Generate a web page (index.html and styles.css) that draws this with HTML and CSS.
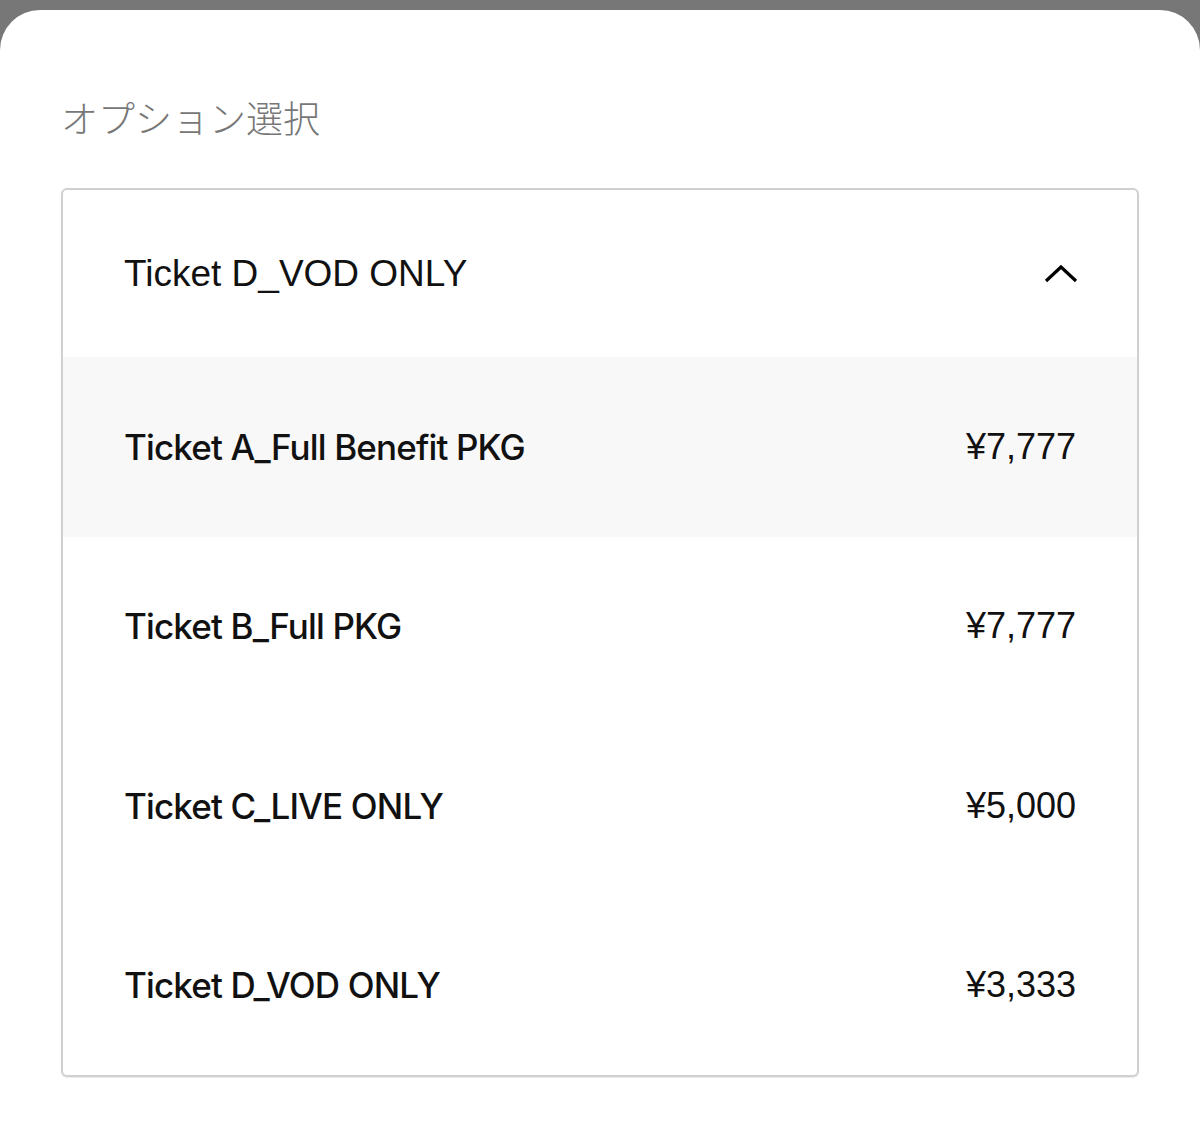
FILE: index.html
```html
<!DOCTYPE html>
<html lang="ja">
<head>
  <meta charset="UTF-8">
  <meta name="viewport" content="width=device-width, initial-scale=1.0">
  <title>オプション選択</title>
  <link rel="stylesheet" href="styles.css">
</head>
<body>

  <div class="sheet">
    <h2 class="sheet-title">オプション選択</h2>

    <div class="select">
      <div class="select-head">
        <span>Ticket D_VOD ONLY</span>
        <svg class="chevron" width="34" height="20" viewBox="0 0 34 20">
          <path d="M2 17 L17 3 L32 17" fill="none" stroke="#000" stroke-width="3.2"/>
        </svg>
      </div>
      <ul class="options">
        <li class="option active"><span>Ticket A_Full Benefit PKG</span><span class="price">¥7,777</span></li>
        <li class="option"><span>Ticket B_Full PKG</span><span class="price">¥7,777</span></li>
        <li class="option"><span>Ticket C_LIVE ONLY</span><span class="price">¥5,000</span></li>
        <li class="option"><span>Ticket D_VOD ONLY</span><span class="price">¥3,333</span></li>
      </ul>
    </div>
  </div>

</body>
</html>
```

FILE: styles.css
```css
body {
  margin: 0;
  background-color: #777;
  font-family: "Liberation Sans", Arial, sans-serif;
}
.sheet {
  margin-top: 10px;
  background-color: #fff;
  border-radius: 40px 40px 0 0;
  min-height: 1116px;
  padding: 0 61px;
  box-sizing: border-box;
  overflow: hidden;
}
.sheet-title {
  margin: 0;
  padding-top: 84px;
  height: 178px;
  box-sizing: border-box;
  font-family: "Noto Sans CJK JP", sans-serif;
  font-weight: 300;
  font-size: 37px;
  line-height: 46px;
  color: #777;
}
.select {
  border: 2px solid #d0d0d0;
  border-radius: 6px;
  box-shadow: 0 1px 1px rgba(0, 0, 0, 0.08);
}
.select-head {
  display: flex;
  justify-content: space-between;
  align-items: center;
  height: 167px;
  padding: 0 61px 0 61px;
  font-size: 37px;
  color: #111;
}
.chevron {
  display: block;
  margin-right: -2px;
}
.options {
  list-style: none;
  margin: 0;
  padding: 0;
}
.option {
  display: flex;
  justify-content: space-between;
  align-items: center;
  height: 179.5px;
  padding: 0 61px;
  font-family: Inter, sans-serif;
  font-size: 35px;
  font-weight: 500;
  letter-spacing: -0.85px;
  color: #111;
}
.option.active {
  background-color: #f8f8f8;
}
.price {
  font-family: "Liberation Sans", Arial, sans-serif;
  font-weight: 400;
  letter-spacing: 0;
  font-size: 36px;
}
```
